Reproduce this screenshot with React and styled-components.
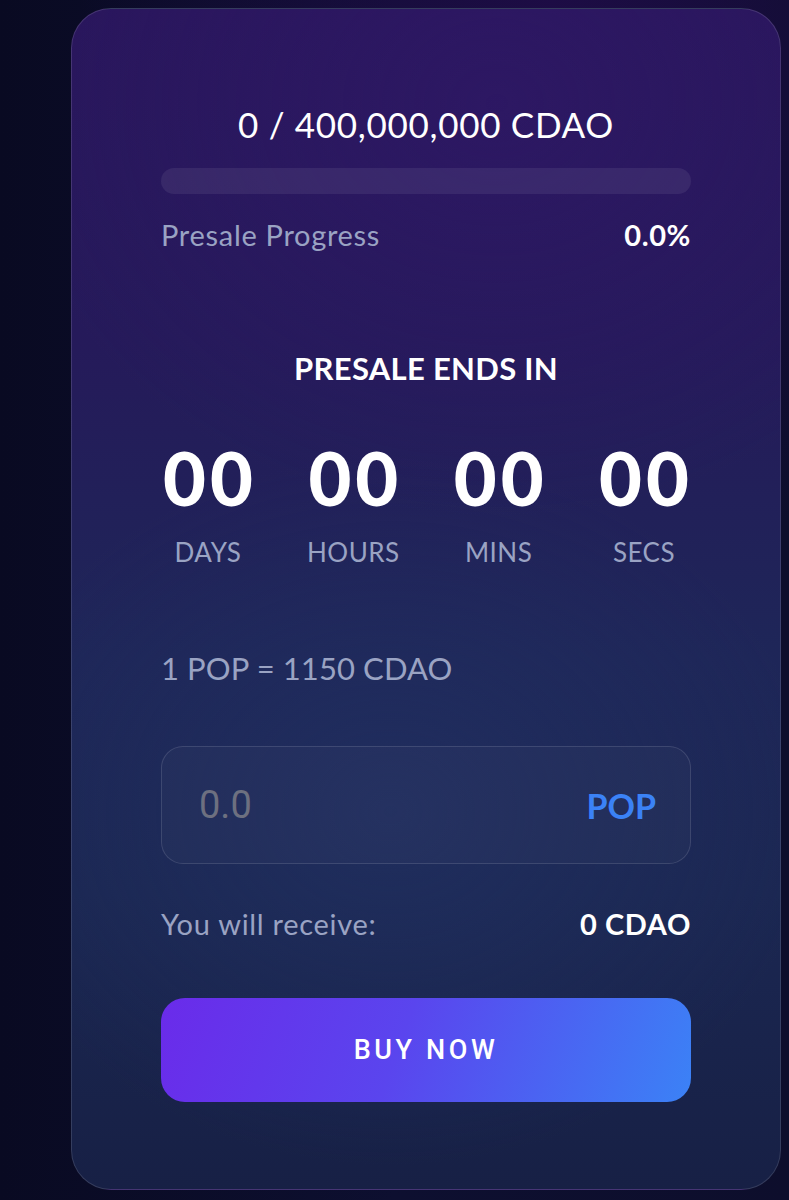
import React from 'react';
import styled, { createGlobalStyle } from 'styled-components';

const GlobalStyle = createGlobalStyle`
  html, body {
    margin: 0;
    padding: 0;
    background: #0b0b29;
  }
  body {
    font-family: Lato, "Noto Sans", sans-serif;
  }
`;

const Page = styled.div`
  width: 789px;
  height: 1200px;
  overflow: hidden;
  box-sizing: border-box;
  padding: 8px 0 0 71px;
  background:
    radial-gradient(ellipse 60% 50% at 70% 0%, #1d0c45 0%, rgba(29, 12, 69, 0) 100%),
    linear-gradient(90deg, #090a22 0%, #0d0f30 50%, #0d0e2c 100%);
`;

const Card = styled.div`
  width: 710px;
  height: 1182px;
  box-sizing: border-box;
  padding: 95px 89px 0 89px;
  border: 1px solid rgba(255, 255, 255, 0.13);
  border-radius: 40px;
  background:
    radial-gradient(ellipse 70% 35% at 60% 8%, rgba(48, 24, 104, 0.6) 0%, rgba(48, 24, 104, 0) 100%),
    radial-gradient(ellipse 60% 30% at 45% 68%, rgba(34, 50, 100, 0.6) 0%, rgba(34, 50, 100, 0) 100%),
    linear-gradient(180deg, #29165c 0%, #251a5a 28%, #1e2658 55%, #1b2752 75%, #172045 100%);
  display: flex;
  flex-direction: column;
`;

const Supply = styled.div`
  color: #ffffff;
  font-size: 35px;
  line-height: 40px;
  letter-spacing: 0.7px;
  text-align: center;
`;

const Track = styled.div`
  margin-top: 24px;
  height: 26px;
  border-radius: 13px;
  background: rgba(255, 255, 255, 0.07);
  overflow: hidden;
`;

const Fill = styled.div`
  height: 100%;
  background: linear-gradient(90deg, #6b2ded, #3b82f6);
`;

const Row = styled.div`
  margin-top: ${(p) => p.$top}px;
  display: flex;
  justify-content: space-between;
  align-items: center;
  line-height: 32px;
  font-size: 29px;
`;

const Muted = styled.span`
  color: #9aa3c3;
  letter-spacing: 0.7px;
`;

const Strong = styled.span`
  color: #ffffff;
  font-weight: 700;
  letter-spacing: 0.6px;
`;

const Heading = styled.div`
  margin-top: 100px;
  color: #ffffff;
  font-size: 31px;
  line-height: 34px;
  font-weight: 700;
  letter-spacing: 0.3px;
  text-align: center;
`;

const Countdown = styled.div`
  margin-top: 57px;
  display: flex;
  justify-content: space-between;
`;

const Unit = styled.div`
  width: 94px;
  display: flex;
  flex-direction: column;
  align-items: center;
`;

const Digits = styled.div`
  color: #ffffff;
  font-size: 74px;
  line-height: 72px;
  font-weight: 900;
  letter-spacing: 4px;
  margin-right: -4px;
`;

const UnitLabel = styled.div`
  margin-top: 23px;
  color: #9aa3c3;
  font-size: 26px;
  line-height: 30px;
  letter-spacing: 0.5px;
  white-space: nowrap;
`;

const Rate = styled.div`
  margin-top: 83px;
  color: #9aa3c3;
  font-size: 31px;
  line-height: 36px;
  letter-spacing: 0.1px;
`;

const InputBox = styled.label`
  margin-top: 60px;
  height: 118px;
  box-sizing: border-box;
  display: flex;
  align-items: center;
  padding: 0 34px 0 37px;
  border: 1px solid rgba(255, 255, 255, 0.12);
  border-radius: 22px;
  background: rgba(255, 255, 255, 0.025);
`;

const AmountInput = styled.input`
  flex: 1;
  min-width: 0;
  border: none;
  outline: none;
  background: transparent;
  color: #ffffff;
  font-family: Roboto, sans-serif;
  font-size: 38px;
  padding: 0;

  &::placeholder {
    color: #6d7080;
  }
`;

const Currency = styled.span`
  color: #3b82f6;
  font-size: 34px;
  font-weight: 700;
`;

const BuyButton = styled.button`
  margin-top: 58px;
  height: 104px;
  border: none;
  border-radius: 24px;
  background: linear-gradient(110deg, #6a2bea 0%, #5a45ee 45%, #3b82f6 100%);
  color: #ffffff;
  font-family: Roboto, sans-serif;
  font-size: 27px;
  font-weight: 500;
  letter-spacing: 3.6px;
  cursor: pointer;
`;

const units = ['DAYS', 'HOURS', 'MINS', 'SECS'];

export default function App() {
  const progress = 0;
  return (
    <>
      <GlobalStyle />
      <Page>
        <Card>
          <Supply>0 / 400,000,000 CDAO</Supply>
          <Track>
            <Fill style={{ width: `${progress}%` }} />
          </Track>
          <Row $top={25}>
            <Muted>Presale Progress</Muted>
            <Strong>0.0%</Strong>
          </Row>
          <Heading>PRESALE ENDS IN</Heading>
          <Countdown>
            {units.map((u) => (
              <Unit key={u}>
                <Digits>00</Digits>
                <UnitLabel>{u}</UnitLabel>
              </Unit>
            ))}
          </Countdown>
          <Rate>1 POP = 1150 CDAO</Rate>
          <InputBox>
            <AmountInput placeholder="0.0" />
            <Currency>POP</Currency>
          </InputBox>
          <Row $top={44}>
            <Muted>You will receive:</Muted>
            <Strong>0 CDAO</Strong>
          </Row>
          <BuyButton>BUY NOW</BuyButton>
        </Card>
      </Page>
    </>
  );
}
